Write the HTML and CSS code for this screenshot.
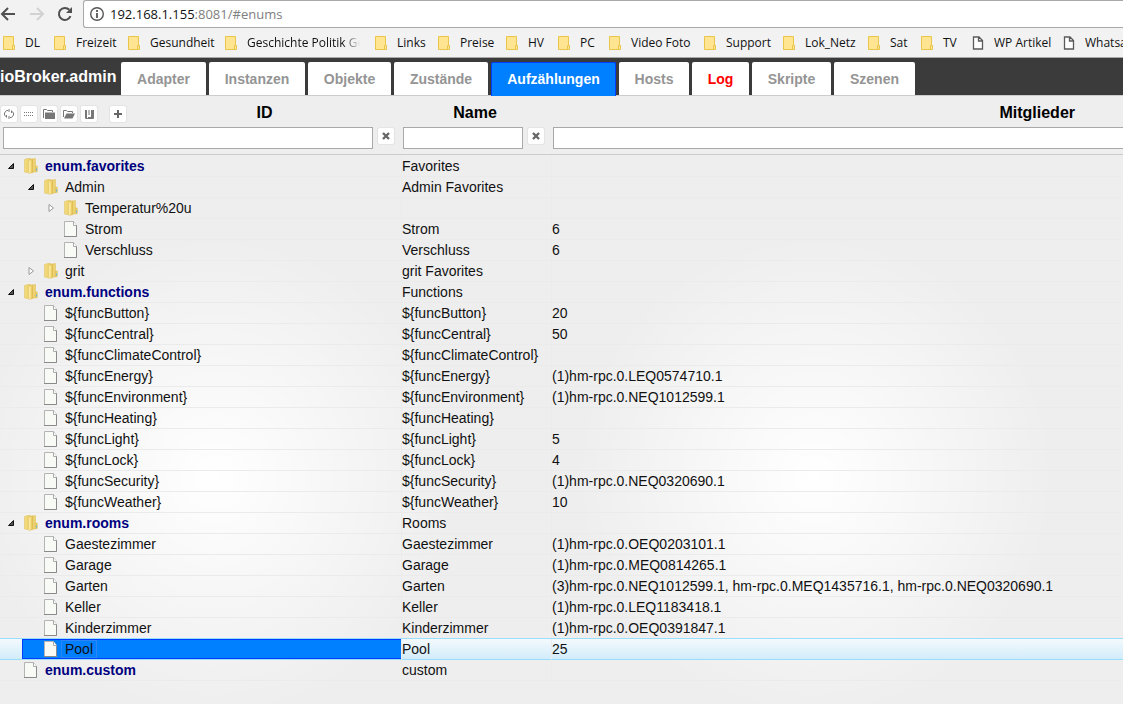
FILE: index.html
```html
<!DOCTYPE html>
<html lang="de">
<head>
<meta charset="utf-8">
<meta name="viewport" content="width=device-width, initial-scale=1">
<title>ioBroker.admin</title>
<link rel="stylesheet" href="styles.css">
</head>
<body>
<svg class="sprite" aria-hidden="true">
  <defs>
    <linearGradient id="gold" x1="0" x2="1"><stop offset="0" stop-color="#f3dc80"/><stop offset="1" stop-color="#e9cc62"/></linearGradient>
    <linearGradient id="gold2" x1="0" x2="1"><stop offset="0" stop-color="#fdf3bd"/><stop offset=".5" stop-color="#f6df86"/><stop offset="1" stop-color="#dfba4a"/></linearGradient>
  </defs>
  <symbol id="bm" viewBox="0 0 12 14"><path d="M.5 .5h10v9h1v4H.5z" fill="#ffe591" stroke="#eac54b"/><path d="M9.5 13V9.5h2" fill="none" stroke="#eac54b"/></symbol>
  <symbol id="page" viewBox="0 0 12 14"><path d="M1.500 1h5.500l3.500 3.500V13h-9zM6.500 1v4h4" fill="#fff" stroke="#5a5a5a" stroke-width="1.300"/></symbol>
  <symbol id="folder" viewBox="0 0 14 16"><path d="M.5 1.500L4 .5h3V14l-1 1-5.500-1z" fill="url(#gold)" stroke="#e3c566" stroke-width=".6"/><path d="M8 1l3.500-.5v13l-4 1.500z" fill="#ecd272" stroke="#dfbd55" stroke-width=".5"/><path d="M4.500 2.500L8.500 1v13L5.500 15.500l-1-1z" fill="url(#gold2)" stroke="#dcb94c" stroke-width=".5"/><path d="M11.500 8h1.800v5.500l-2 .5z" fill="#edd274" stroke="#d9b64a" stroke-width=".5"/><path d="M12.500 10.500v2" stroke="#5fb4dc"/></symbol>
  <symbol id="doc" viewBox="0 0 14 16"><path d="M.5 .5h9l3 4v11H.5z" fill="#f7faf5" stroke="#b4b4b4"/><path d="M9.500 .5v4h3" fill="#fff" stroke="#aaa"/><path d="M0 15.500h12.500v-11" fill="none" stroke="#8a8a8a"/></symbol>
  <symbol id="open" viewBox="0 0 8 8"><path d="M6.500 1.500v5h-5z" fill="#555" stroke="#111"/></symbol>
  <symbol id="shut" viewBox="0 0 8 8"><path d="M2 .5v7L6.500 4z" fill="#fff" stroke="#999"/></symbol>
</svg>

<header class="browser">
  <div class="nav">
    <button class="navbtn" aria-label="Zurück"><svg viewBox="0 0 16 16"><path d="M15 8H2M8 2L2 8l6 6" fill="none" stroke="#505050" stroke-width="2"/></svg></button>
    <button class="navbtn" aria-label="Vorwärts"><svg viewBox="0 0 16 16"><path d="M1 8h13M8 2l6 6-6 6" fill="none" stroke="#d2d2d2" stroke-width="2"/></svg></button>
    <button class="navbtn" aria-label="Neu laden"><svg viewBox="0 0 16 16"><path d="M13.500 10.200A6 6 0 1 1 12.300 3.800" fill="none" stroke="#505050" stroke-width="2"/><path d="M15 1v6H9z" fill="#505050"/></svg></button>
    <div class="address">
      <svg class="info" viewBox="0 0 16 16"><circle cx="8" cy="8" r="6.300" fill="none" stroke="#555" stroke-width="1.400"/><path d="M8 4v2M8 7v5" stroke="#555" stroke-width="1.800"/></svg>
      <span class="host">192.168.1.155</span><span class="path">:8081/#enums</span>
    </div>
  </div>
  <nav class="bookmarks">
    <a href="#"><svg><use href="#bm"/></svg><span>DL</span></a>
    <a href="#"><svg><use href="#bm"/></svg><span>Freizeit</span></a>
    <a href="#"><svg><use href="#bm"/></svg><span>Gesundheit</span></a>
    <a href="#" class="faded"><svg><use href="#bm"/></svg><span>Geschichte Politik Geo</span></a>
    <a href="#"><svg><use href="#bm"/></svg><span>Links</span></a>
    <a href="#"><svg><use href="#bm"/></svg><span>Preise</span></a>
    <a href="#"><svg><use href="#bm"/></svg><span>HV</span></a>
    <a href="#"><svg><use href="#bm"/></svg><span>PC</span></a>
    <a href="#"><svg><use href="#bm"/></svg><span>Video Foto</span></a>
    <a href="#"><svg><use href="#bm"/></svg><span>Support</span></a>
    <a href="#"><svg><use href="#bm"/></svg><span>Lok_Netz</span></a>
    <a href="#"><svg><use href="#bm"/></svg><span>Sat</span></a>
    <a href="#"><svg><use href="#bm"/></svg><span>TV</span></a>
    <a href="#"><svg><use href="#page"/></svg><span>WP Artikel</span></a>
    <a href="#"><svg><use href="#page"/></svg><span>Whatsa</span></a>
  </nav>
</header>

<div class="appbar">
  <div class="brand">ioBroker.admin</div>
  <nav class="tabs">
    <a href="#adapter">Adapter</a>
    <a href="#instances">Instanzen</a>
    <a href="#objects">Objekte</a>
    <a href="#states">Zustände</a>
    <a href="#enums" class="active">Aufzählungen</a>
    <a href="#hosts">Hosts</a>
    <a href="#log" class="alert">Log</a>
    <a href="#scripts">Skripte</a>
    <a href="#scenes">Szenen</a>
  </nav>
</div>

<main class="content">
  <section class="head">
    <div class="col">
      <div class="title">
        <div class="tools">
          <button class="tool" aria-label="Aktualisieren"><svg viewBox="0 0 12 12"><path d="M5 2.500H3.500L1.500 5v2l2 2M3.500 9.500V7M7 9.500h1.500l2-2.500V5l-2-2M8.500 2.500V5M6 1v3M6 8v3" fill="none" stroke="#777"/></svg></button>
          <button class="tool" aria-label="Liste"><svg viewBox="0 0 12 12"><path d="M1 4.500h10M1 7.500h10" stroke="#777" stroke-dasharray="1 1"/></svg></button>
          <button class="tool" aria-label="Alle zuklappen"><svg viewBox="0 0 12 12"><path d="M.5 10V1.500h3l1 1h5V4" fill="none" stroke="#777"/><path d="M2 4.500h10V11H2z" fill="#777"/></svg></button>
          <button class="tool" aria-label="Alle aufklappen"><svg viewBox="0 0 12 12"><path d="M.5 9V2.500h3l1 1h5V5" fill="none" stroke="#777"/><path d="M3.500 5.500H12L9.500 10.500H1z" fill="#777"/></svg></button>
          <button class="tool" aria-label="Sortieren"><svg viewBox="0 0 12 12"><path d="M2 2h2v8H2zM5.500 2h1v5h-1zM8 2h2v8H5V9h3z" fill="#777"/><path d="M2.500 2v8.500h8V2" fill="none" stroke="#777"/></svg></button>
          <button class="tool add" aria-label="Hinzufügen"><svg viewBox="0 0 12 12"><path d="M6 2v8M2 6h8" stroke="#666" stroke-width="2"/></svg></button>
        </div>
        <label for="f-id">ID</label>
      </div>
      <div class="filter"><input id="f-id" type="text"><button class="tool" aria-label="ID-Filter löschen"><svg viewBox="0 0 12 12"><path d="M3 3l6 6M9 3L3 9" stroke="#666" stroke-width="2.400"/></svg></button></div>
    </div>
    <div class="col">
      <div class="title"><label for="f-name">Name</label></div>
      <div class="filter"><input id="f-name" type="text"><button class="tool" aria-label="Name-Filter löschen"><svg viewBox="0 0 12 12"><path d="M3 3l6 6M9 3L3 9" stroke="#666" stroke-width="2.400"/></svg></button></div>
    </div>
    <div class="col members">
      <div class="title"><label for="f-mem">Mitglieder</label></div>
      <div class="filter"><input id="f-mem" type="text"></div>
    </div>
  </section>

  <table class="tree">
    <colgroup><col class="c-id"><col class="c-name"><col></colgroup>
    <tbody>
      <tr><td><div class="node root"><svg class="exp"><use href="#open"/></svg><svg class="ico"><use href="#folder"/></svg><span>enum.favorites</span></div></td><td>Favorites</td><td></td></tr>
      <tr><td><div class="node l1"><svg class="exp"><use href="#open"/></svg><svg class="ico"><use href="#folder"/></svg><span>Admin</span></div></td><td>Admin Favorites</td><td></td></tr>
      <tr><td><div class="node l2"><svg class="exp"><use href="#shut"/></svg><svg class="ico"><use href="#folder"/></svg><span>Temperatur%20u</span></div></td><td></td><td></td></tr>
      <tr><td><div class="node l2"><svg class="exp"></svg><svg class="ico"><use href="#doc"/></svg><span>Strom</span></div></td><td>Strom</td><td>6</td></tr>
      <tr><td><div class="node l2"><svg class="exp"></svg><svg class="ico"><use href="#doc"/></svg><span>Verschluss</span></div></td><td>Verschluss</td><td>6</td></tr>
      <tr><td><div class="node l1"><svg class="exp"><use href="#shut"/></svg><svg class="ico"><use href="#folder"/></svg><span>grit</span></div></td><td>grit Favorites</td><td></td></tr>
      <tr><td><div class="node root"><svg class="exp"><use href="#open"/></svg><svg class="ico"><use href="#folder"/></svg><span>enum.functions</span></div></td><td>Functions</td><td></td></tr>
      <tr><td><div class="node l1"><svg class="exp"></svg><svg class="ico"><use href="#doc"/></svg><span>${funcButton}</span></div></td><td>${funcButton}</td><td>20</td></tr>
      <tr><td><div class="node l1"><svg class="exp"></svg><svg class="ico"><use href="#doc"/></svg><span>${funcCentral}</span></div></td><td>${funcCentral}</td><td>50</td></tr>
      <tr><td><div class="node l1"><svg class="exp"></svg><svg class="ico"><use href="#doc"/></svg><span>${funcClimateControl}</span></div></td><td>${funcClimateControl}</td><td></td></tr>
      <tr><td><div class="node l1"><svg class="exp"></svg><svg class="ico"><use href="#doc"/></svg><span>${funcEnergy}</span></div></td><td>${funcEnergy}</td><td>(1)hm-rpc.0.LEQ0574710.1</td></tr>
      <tr><td><div class="node l1"><svg class="exp"></svg><svg class="ico"><use href="#doc"/></svg><span>${funcEnvironment}</span></div></td><td>${funcEnvironment}</td><td>(1)hm-rpc.0.NEQ1012599.1</td></tr>
      <tr><td><div class="node l1"><svg class="exp"></svg><svg class="ico"><use href="#doc"/></svg><span>${funcHeating}</span></div></td><td>${funcHeating}</td><td></td></tr>
      <tr><td><div class="node l1"><svg class="exp"></svg><svg class="ico"><use href="#doc"/></svg><span>${funcLight}</span></div></td><td>${funcLight}</td><td>5</td></tr>
      <tr><td><div class="node l1"><svg class="exp"></svg><svg class="ico"><use href="#doc"/></svg><span>${funcLock}</span></div></td><td>${funcLock}</td><td>4</td></tr>
      <tr><td><div class="node l1"><svg class="exp"></svg><svg class="ico"><use href="#doc"/></svg><span>${funcSecurity}</span></div></td><td>${funcSecurity}</td><td>(1)hm-rpc.0.NEQ0320690.1</td></tr>
      <tr><td><div class="node l1"><svg class="exp"></svg><svg class="ico"><use href="#doc"/></svg><span>${funcWeather}</span></div></td><td>${funcWeather}</td><td>10</td></tr>
      <tr><td><div class="node root"><svg class="exp"><use href="#open"/></svg><svg class="ico"><use href="#folder"/></svg><span>enum.rooms</span></div></td><td>Rooms</td><td></td></tr>
      <tr><td><div class="node l1"><svg class="exp"></svg><svg class="ico"><use href="#doc"/></svg><span>Gaestezimmer</span></div></td><td>Gaestezimmer</td><td>(1)hm-rpc.0.OEQ0203101.1</td></tr>
      <tr><td><div class="node l1"><svg class="exp"></svg><svg class="ico"><use href="#doc"/></svg><span>Garage</span></div></td><td>Garage</td><td>(1)hm-rpc.0.MEQ0814265.1</td></tr>
      <tr><td><div class="node l1"><svg class="exp"></svg><svg class="ico"><use href="#doc"/></svg><span>Garten</span></div></td><td>Garten</td><td>(3)hm-rpc.0.NEQ1012599.1, hm-rpc.0.MEQ1435716.1, hm-rpc.0.NEQ0320690.1</td></tr>
      <tr><td><div class="node l1"><svg class="exp"></svg><svg class="ico"><use href="#doc"/></svg><span>Keller</span></div></td><td>Keller</td><td>(1)hm-rpc.0.LEQ1183418.1</td></tr>
      <tr><td><div class="node l1"><svg class="exp"></svg><svg class="ico"><use href="#doc"/></svg><span>Kinderzimmer</span></div></td><td>Kinderzimmer</td><td>(1)hm-rpc.0.OEQ0391847.1</td></tr>
      <tr class="selected"><td><div class="node l1"><svg class="exp"></svg><svg class="ico"><use href="#doc"/></svg><span>Pool</span></div></td><td>Pool</td><td>25</td></tr>
      <tr><td><div class="node root"><svg class="exp"></svg><svg class="ico"><use href="#doc"/></svg><span>enum.custom</span></div></td><td>custom</td><td></td></tr>
    </tbody>
  </table>
</main>
</body>
</html>
```
FILE: styles.css
```css
* { box-sizing: border-box; }
html { height: 100%; }
body {
  margin: 0;
  min-height: 100%;
  display: flex;
  flex-direction: column;
  overflow-x: hidden;
  background: #eee;
  color: #111;
  font: 14px/20px "Liberation Sans", Arial, sans-serif;
}
a { color: inherit; text-decoration: none; }
button { padding: 0; border: 0; background: none; }
svg { display: block; flex: none; }
.sprite { position: absolute; width: 0; height: 0; }

/* Browser chrome */
.browser {
  background: #f2f2f2;
  border-bottom: 1px solid #a8a8a8;
  font-family: "Open Sans", "Noto Sans", sans-serif;
}
.nav { display: flex; align-items: center; height: 28px; }
.navbtn { width: 28px; height: 28px; flex: none; }
.navbtn:first-child { width: 23px; }
.navbtn svg { width: 16px; height: 16px; }
.navbtn + .navbtn svg { margin: auto; }
.address {
  flex: 1;
  display: flex;
  align-items: center;
  height: 28px;
  margin-left: 4px;
  padding-left: 5px;
  background: #fff;
  border: 1px solid #a8a8a8;
  border-right: 0;
  border-radius: 3px 0 0 3px;
  font-size: 13px;
}
.info { width: 16px; height: 16px; margin-right: 5px; }
.path { color: #808080; }
.bookmarks {
  display: grid;
  grid-template-columns: 51px 74px 97px 150px 63px 68px 52px 51px 95px 79px 85px 53px 51px 91px 91px;
  height: 29px;
  padding-left: 3px;
  font-size: 12px;
  overflow: hidden;
}
.bookmarks a { display: flex; align-items: center; gap: 10px; white-space: nowrap; min-width: 0; }
.bookmarks svg { width: 12px; height: 14px; }
.faded span {
  width: 113px;
  overflow: hidden;
  -webkit-mask-image: linear-gradient(90deg, #000 85%, transparent);
  mask-image: linear-gradient(90deg, #000 85%, transparent);
}

/* Application bar */
.appbar {
  display: flex;
  height: 38px;
  background: #3b3b3b;
  border-bottom: 1px solid #ccc;
}
.brand { width: 121px; color: #fff; font-weight: bold; font-size: 16px; line-height: 38px; }
.tabs {
  display: grid;
  grid-template-columns: 85px 96px 83px 94px 125px 70px 57px 79px 81px;
  gap: 3px;
  padding-top: 4px;
}
.tabs a {
  height: 33px;
  line-height: 34px;
  text-align: center;
  background: #fff;
  border-radius: 2px 2px 0 0;
  color: #949494;
  font-weight: bold;
}
.tabs .active { height: 34px; background: #007fff; border: 1px solid #003eff; border-bottom: 0; color: #fff; line-height: 32px; }
.tabs .alert { color: #f00; }

/* Column heads and filters */
.content {
  flex: 1;
  background:
    radial-gradient(circle 240px at 815px 380px, #fff, rgba(255, 255, 255, 0)),
    radial-gradient(circle 240px at 215px 380px, #fff, rgba(255, 255, 255, 0)),
    #eee;
}
.head {
  display: flex;
  height: 59px;
  background: #eee;
  border-bottom: 1px solid #ccc;
}
.col { width: 150px; flex: none; padding-left: 3px; }
.col:first-child { width: 400px; }
.col.members { flex: 1; }
.title {
  display: flex;
  align-items: center;
  height: 31px;
  padding-top: 2px;
  font-size: 16px;
  font-weight: bold;
  color: #000;
}
.title label { flex: 1; text-align: center; }
.col:nth-child(2) label { padding-right: 3px; }
.members .title label { text-align: right; padding-right: 48px; }
.tools { display: flex; gap: 4px; width: 128px; padding-top: 2px; margin-left: -2px; }
.tool {
  display: flex;
  align-items: center;
  justify-content: center;
  flex: none;
  width: 16px;
  height: 16px;
  background: #fff;
  border-radius: 2px;
  box-shadow: 0 0 0 1px #e4e4e4;
}
.tool svg { width: 12px; height: 12px; }
.tool.add { margin-left: 9px; }
.filter { display: flex; gap: 5px; }
.filter input {
  flex: 1;
  min-width: 0;
  height: 22px;
  border: 1px solid #a9a9a9;
  background: #fff;
  font: inherit;
}
.filter .tool { margin-right: 6px; margin-top: 1px; }
.members input { border-right: 0; }

/* Enum tree */
.tree { width: 100%; table-layout: fixed; border-collapse: separate; border-spacing: 0; padding-top: 1px; }
.c-id { width: 401px; }
.c-name { width: 150px; }
.tree td {
  height: 21px;
  padding: 0;
  line-height: 20px;
  border-bottom: 1px solid #ebebeb;
  border-left: 1px solid #ebebeb;
  white-space: nowrap;
}
.tree td:first-child { border-left: 0; }
.node { display: flex; align-items: center; height: 20px; padding-left: 7px; }
.node.l1 { padding-left: 27px; }
.node.l2 { padding-left: 47px; }
.exp { width: 8px; height: 8px; margin-right: 9px; }
.ico { width: 14px; height: 16px; margin-right: 7px; }
.root span { color: #000080; font-weight: bold; }
.selected td {
  background: linear-gradient(#f4fafd, #d2ecfa);
  border-bottom-color: #99defd;
  box-shadow: 0 -1px #99defd;
}
.selected .node {
  margin-left: 22px;
  padding-left: 5px;
  background: #007fff;
  border: 1px solid #003eff;
  border-width: 1px 0 1px 1px;
}
.selected .exp { width: 7px; }
.selected span { margin-left: -4px; padding: 0 4px; line-height: 18px; box-shadow: inset 0 0 0 1px #2b86f5; }
```
